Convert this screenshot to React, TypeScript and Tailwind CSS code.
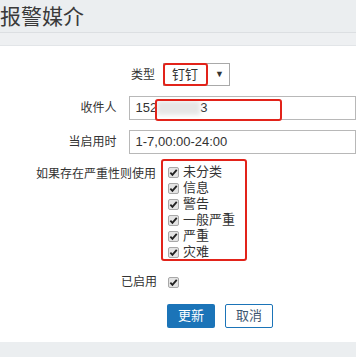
const SEVERITIES = ["未分类", "信息", "警告", "一般严重", "严重", "灾难"];

const font = "font-['Liberation_Sans','Noto_Sans_CJK_SC',sans-serif]";

const Check = () => (
  <span className="w-[11px] h-[11px] shrink-0 border border-[#a8a8a8] bg-[#e4e4e4] rounded-[2px] flex items-center justify-center">
    <svg width="9" height="9" viewBox="0 0 10 10">
      <path d="M1.5 5.2l2.3 2.5L8.6 2" stroke="#222" strokeWidth="2" fill="none" />
    </svg>
  </span>
);

const Redbox = ({ className }: { className: string }) => (
  <div className={`absolute border-2 border-[#e2231a] rounded-[3px] pointer-events-none ${className}`} />
);

export default function App() {
  return (
    <div className={`w-[356px] h-[357px] overflow-hidden bg-[#ebeef0] text-[#333] ${font}`}>
      {/* header */}
      <div className="h-[33px] flex items-center border-b border-[#dcdfe2]">
        <h1 className="text-[21px] leading-none text-[#3a3a3a]">报警媒介</h1>
      </div>
      <div className="h-[13px] bg-[#eef0f2] border-b border-[#e2e5e8]" />

      {/* form */}
      <div className="bg-white pt-[17px] pb-[14px] text-[12px] relative">
        <div className="flex items-center h-[23px]">
          <label className="w-[155px] text-right">类型</label>
          <div className="ml-[8px] relative w-[67px] h-[23px] border border-[#a9a9a9] flex items-center pl-[8px] text-[13px]">
            <span>钉钉</span>
            <span className="ml-auto mr-[5px] text-[9px]">▼</span>
            <Redbox className="left-[-1px] top-[-1px] w-[45px] h-[23px]" />
          </div>
        </div>

        <div className="flex items-center h-[24px] mt-[10px] relative">
          <label className="w-[155px] text-right">收件人</label>
          <div className="ml-[12px] w-[300px] h-[24px] border border-[#b8b8b8] flex items-center pl-[6px] text-[13px]">
            <span>152</span>
            <span className="w-[43px] h-[14px] bg-[#e6e6e6] blur-[2px]" />
            <span>3</span>
          </div>
          <Redbox className="left-[155px] top-[3px] w-[127px] h-[22px]" />
        </div>

        <div className="flex items-center h-[24px] mt-[10px]">
          <label className="w-[155px] text-right">当启用时</label>
          <div className="ml-[12px] w-[300px] h-[24px] border border-[#b8b8b8] flex items-center pl-[6px] text-[13px]">
            1-7,00:00-24:00
          </div>
        </div>

        <div className="flex items-start mt-[10px]">
          <label className="w-[156px] text-right leading-[16px] pt-[2px]">如果存在严重性则使用</label>
          <div className="ml-[12px] relative">
            {SEVERITIES.map((s) => (
              <div key={s} className="flex items-center gap-[4px] h-[16px] text-[13px]">
                <Check />
                <span>{s}</span>
              </div>
            ))}
            <Redbox className="left-[-7px] top-[-5px] w-[86px] h-[102px]" />
          </div>
        </div>

        <div className="flex items-center h-[16px] mt-[14px]">
          <label className="w-[157px] text-right">已启用</label>
          <div className="ml-[11px]">
            <Check />
          </div>
        </div>

        <div className="flex gap-[10px] ml-[167px] mt-[14px] text-[13px]">
          <button className="w-[48px] h-[24px] bg-[#1b74b8] text-white rounded-[2px]">更新</button>
          <button className="w-[48px] h-[24px] border border-[#1b74b8] text-[#3e5670] bg-white rounded-[2px]">取消</button>
        </div>
      </div>
    </div>
  );
}
